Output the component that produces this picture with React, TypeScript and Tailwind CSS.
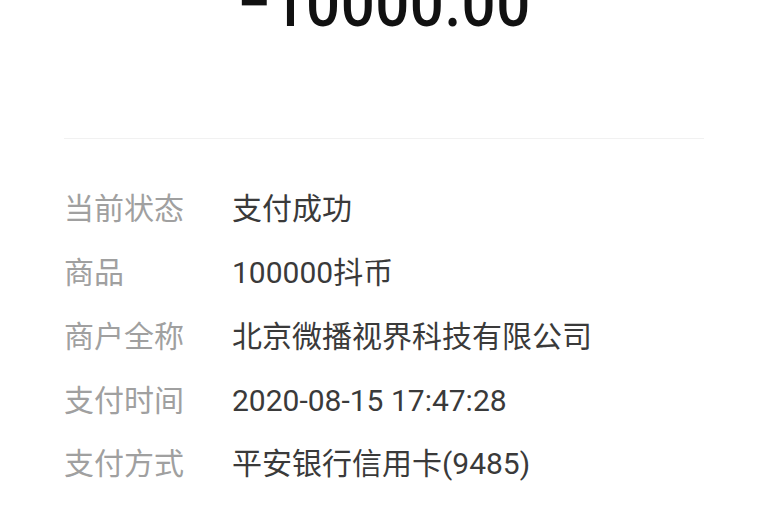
import React from 'react';

interface DetailRow {
  label: string;
  value: string;
}

const rows: DetailRow[] = [
  { label: '当前状态', value: '支付成功' },
  { label: '商品', value: '100000抖币' },
  { label: '商户全称', value: '北京微播视界科技有限公司' },
  { label: '支付时间', value: '2020-08-15 17:47:28' },
  { label: '支付方式', value: '平安银行信用卡(9485)' },
];

const App: React.FC = () => {
  return (
    <div className="h-[510px] w-[768px] overflow-hidden bg-white font-['Roboto','Noto_Sans_CJK_SC',sans-serif]">
      {/* amount, scrolled partly out of view */}
      <div className="mt-[-30px] h-[70px] origin-top scale-y-[1.12] text-center text-[60px] font-medium leading-none tracking-[0.5px] text-[#111111]">
        −10000.00
      </div>

      <div className="mx-[64px] mt-[98px] h-px bg-[#f1f1f1]" />

      <div className="mt-[38px] px-[64px]">
        {rows.map((row) => (
          <div key={row.label} className="flex h-[63.75px] items-center text-[30px]">
            <span className="w-[168px] shrink-0 text-[#a0a0a0]">{row.label}</span>
            <span className="text-[#3a3a3a]">{row.value}</span>
          </div>
        ))}
      </div>
    </div>
  );
};

export default App;
